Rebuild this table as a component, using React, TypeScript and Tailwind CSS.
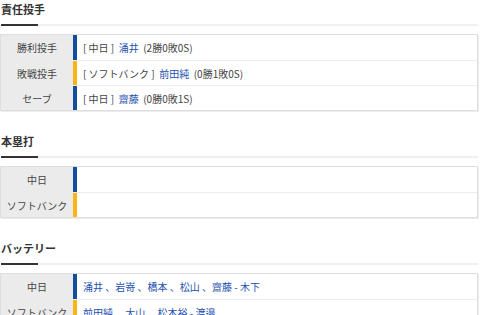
const font = "font-['Noto_Sans_CJK_JP','Noto_Sans',sans-serif]";

type Row = { label: string; team: "d" | "h"; content: React.ReactNode };

const bars = { d: "bg-[#134d9b]", h: "bg-[#fbb514]" };

function Link({ children }: { children: React.ReactNode }) {
  return <span className="text-[#2350ae]">{children}</span>;
}

function Section({ title, rows, last }: { title: string; rows: Row[]; last?: boolean }) {
  return (
    <section className={last ? "" : "mb-[21px]"}>
      <h2 className="h-[24px] pt-[1px] pl-[1px] text-[11px] leading-[16px] font-bold text-[#333]">{title}</h2>
      <div className="flex h-[2px] pl-[1px] pr-[2px]">
        <div className="w-[37px] bg-[#333]" />
        <div className="flex-1 bg-[#f0f0f0]" />
      </div>
      <div className="mt-[8px] mr-[2px] border border-[#dedede] shadow-[1px_1px_0_#ececec]">
        {rows.map((r, i) => (
          <div
            key={i}
            className={`flex h-[25px] ${i > 0 ? "border-t border-[#ececec]" : ""}`}
          >
            <div className="flex w-[72px] items-center justify-center bg-[#ebebeb] text-[10px] text-[#444]">
              {r.label}
            </div>
            <div className={`w-[4px] ${bars[r.team]}`} />
            <div className="flex flex-1 items-center pl-[6px] text-[10px] text-[#444]">{r.content}</div>
          </div>
        ))}
      </div>
    </section>
  );
}

export default function App() {
  return (
    <div className={`h-[315px] w-[480px] overflow-hidden bg-white ${font}`}>
      <Section
        title="責任投手"
        rows={[
          { label: "勝利投手", team: "d", content: <span>[&nbsp;中日&nbsp;]&nbsp;&nbsp;<Link>涌井</Link>&nbsp;&nbsp;(2勝0敗0S)</span> },
          { label: "敗戦投手", team: "h", content: <span>[&nbsp;ソフトバンク&nbsp;]&nbsp;&nbsp;<Link>前田純</Link>&nbsp;&nbsp;(0勝1敗0S)</span> },
          { label: "セーブ", team: "d", content: <span>[&nbsp;中日&nbsp;]&nbsp;&nbsp;<Link>齋藤</Link>&nbsp;&nbsp;(0勝0敗1S)</span> },
        ]}
      />
      <Section
        title="本塁打"
        rows={[
          { label: "中日", team: "d", content: null },
          { label: "ソフトバンク", team: "h", content: null },
        ]}
      />
      <Section
        last
        title="バッテリー"
        rows={[
          { label: "中日", team: "d", content: <Link>涌井 、岩嵜 、橋本 、松山 、齋藤 - 木下</Link> },
          { label: "ソフトバンク", team: "h", content: <Link>前田純 、大山 、松本裕 - 渡邉</Link> },
        ]}
      />
    </div>
  );
}
